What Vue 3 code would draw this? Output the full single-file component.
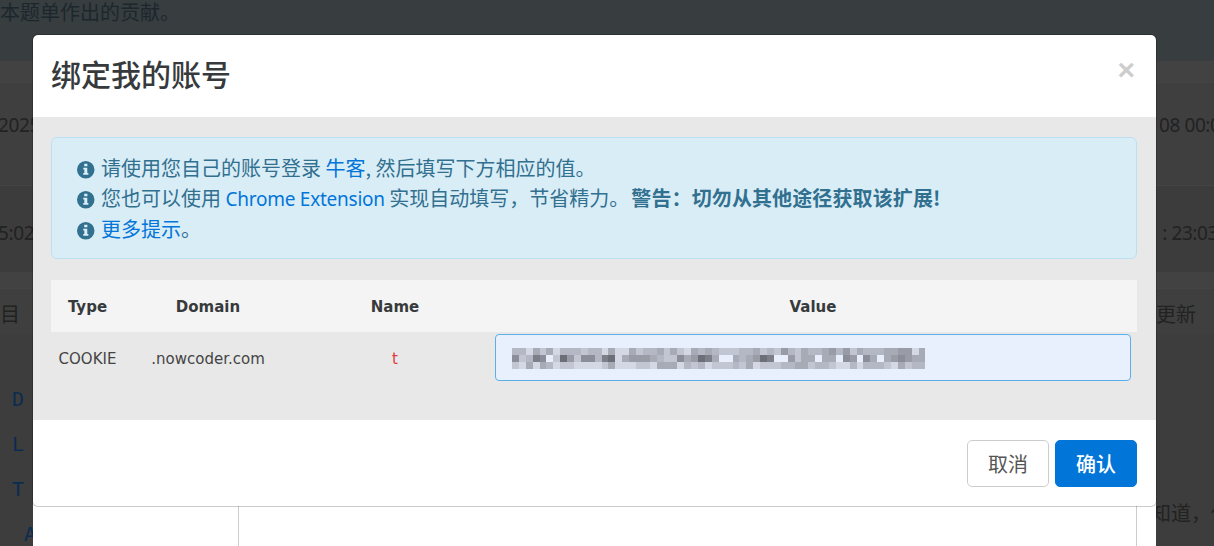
<script setup>
const infoPath = 'M8 0a8 8 0 1 1 0 16A8 8 0 0 1 8 0ZM6.6 2.6v2.3h2.9V2.6ZM5.7 6.2v1.6h1v3.1h-1v1.7h4.7v-1.7h-1V6.2Z'
const rows = [
  '66857586667668588576' + '65757856567776657674' + '67566546475666554485',
  '37623971473362185444' + '56773541259956541299' + '47559559349359543455',
  '78585687788887588877' + '85558676877767587776' + '65576678868666785766'
]
const palette = ['#5f6168', '#6c6f77', '#7c7f88', '#8b8e98', '#999ca7', '#a7abb6', '#b4b8c4', '#c2c6d2', '#d3d8e4', '#e8eefc']
const cells = rows.flatMap((row) =>
  Array.from({ length: 60 }, (_, i) => palette[Number(row[i] ?? 9)])
)
</script>

<template>
  <div class="page">
    <div class="top">本题单作出的贡献。</div>
    <div class="band"></div>
    <div class="row row-date"><span class="clip-left">2025</span><span class="clip-date">08 00:00</span></div>
    <div class="row row-time"><span class="clip-left">5:02</span><span class="clip-time">: 23:03</span></div>
    <div class="band band-short"></div>
    <div class="row row-tabs"><span>目</span><span class="tab-right">更新</span></div>
    <div class="lower">
      <div class="side-left">
        <span>D</span>
        <span>L</span>
        <span>T</span>
        <span class="indent">A</span>
      </div>
      <div class="sheet"><div class="sheet-main"></div></div>
      <div class="side-right"><span>知道，你</span></div>
    </div>

    <section class="modal">
      <header class="modal-head">
        <h2>绑定我的账号</h2>
        <span class="close">×</span>
      </header>
      <div class="modal-body">
        <div class="alert">
          <p><svg class="info" viewBox="0 0 16 16"><path :d="infoPath" fill-rule="evenodd" /></svg>请使用您自己的账号登录 <a>牛客</a>, 然后填写下方相应的值。</p>
          <p><svg class="info" viewBox="0 0 16 16"><path :d="infoPath" fill-rule="evenodd" /></svg>您也可以使用 <a class="latin">Chrome Extension</a> 实现自动填写，节省精力。<strong>警告：切勿从其他途径获取该扩展!</strong></p>
          <p><svg class="info" viewBox="0 0 16 16"><path :d="infoPath" fill-rule="evenodd" /></svg><a>更多提示</a>。</p>
        </div>
        <div class="table">
          <div class="tr th">
            <div class="c-type">Type</div>
            <div class="c-domain">Domain</div>
            <div class="c-name">Name</div>
            <div class="c-value">Value</div>
          </div>
          <div class="tr td">
            <div class="c-type">COOKIE</div>
            <div class="c-domain">.nowcoder.com</div>
            <div class="c-name red">t</div>
            <div class="c-value">
              <div class="input">
                <div class="mosaic">
                  <i v-for="(c, i) in cells" :key="i" :style="{ background: c }"></i>
                </div>
              </div>
            </div>
          </div>
        </div>
      </div>
      <footer class="modal-foot">
        <button class="btn">取消</button>
        <button class="btn primary">确认</button>
      </footer>
    </section>
  </div>
</template>

<style>
html, body { margin: 0; background: #3d3d3d; }
</style>

<style scoped>
.page {
  position: relative;
  width: 1214px;
  height: 546px;
  overflow: hidden;
  background: #3d3d3d;
  color: #222;
  font: 20px/30px "Noto Sans CJK SC", sans-serif;
}
.top {
  height: 61px;
  background: #383d40;
  color: #1c272d;
  line-height: 24px;
}
.band { height: 21px; background: #424242; }
.band-short { height: 16px; }
.row {
  display: flex;
  justify-content: space-between;
  align-items: center;
  overflow: hidden;
  box-sizing: border-box;
  border-top: 1px solid #444;
}
.row-date, .row-time {
  font: 19px/30px "Noto Sans", sans-serif;
  letter-spacing: -0.4px;
  white-space: nowrap;
}
.row-date { height: 103px; background: #3f3f3f; padding-bottom: 19px; }
.row-time { height: 87px; background: #3c3c3c; padding-top: 8px; }
.row-tabs { height: 46px; background: #3f3f3f; padding-top: 5px; }
.clip-left { margin-left: -2px; }
.clip-date { margin-right: -17px; }
.clip-time { margin-right: -4px; }
.tab-right { margin-right: 18px; }
.lower {
  display: grid;
  grid-template-columns: 33px 1123px 58px;
  height: 212px;
}
.side-left {
  display: flex;
  flex-direction: column;
  align-items: flex-start;
  padding: 50px 0 0 12px;
  gap: 15px;
  color: #0a2c50;
  font: 20px/30px "DejaVu Sans Mono", monospace;
  white-space: nowrap;
}
.indent { margin-left: 12px; }
.sheet { background: #fff; }
.sheet-main {
  margin-left: 205px;
  width: 899px;
  height: 100%;
  border-left: 1px solid #ccc;
  border-right: 1px solid #ccc;
  box-sizing: border-box;
}
.side-right {
  overflow: hidden;
  padding-top: 164px;
  white-space: nowrap;
}
.side-right span { display: block; margin-left: -5px; }

.modal {
  position: absolute;
  left: 32px;
  top: 34px;
  width: 1125px;
  height: 473px;
  box-sizing: border-box;
  display: flex;
  flex-direction: column;
  background: #fff;
  border: 1px solid rgba(0, 0, 0, 0.2);
  border-radius: 6px;
  background-clip: padding-box;
  overflow: hidden;
}
.modal-head {
  height: 82px;
  flex: none;
  display: flex;
  justify-content: space-between;
  align-items: center;
  padding: 0 18px;
  box-sizing: border-box;
}
.modal-head h2 {
  margin: -6px 0 0;
  font-size: 30px;
  line-height: 76px;
  font-weight: 500;
  color: #373a3c;
}
.close {
  font: 700 30px/30px "Liberation Sans", sans-serif;
  color: #cdcdcd;
  margin-right: 3px;
  margin-top: -12px;
}
.modal-body {
  flex: none;
  height: 303px;
  background: #e8e8e8;
  padding: 20px 19px 0 18px;
  box-sizing: border-box;
}
.alert {
  height: 122px;
  box-sizing: border-box;
  padding: 15px 25px;
  background: #d9edf7;
  border: 1px solid #bcdff1;
  border-radius: 6px;
  color: #31708f;
}
.alert p {
  margin: 0;
  height: 30px;
  line-height: 30px;
  white-space: nowrap;
}
.alert p:nth-child(3) { margin-top: 1px; }
.alert a { color: #0275d8; }
.latin {
  font-family: "Noto Sans", sans-serif;
  font-size: 19px;
  letter-spacing: -0.25px;
}
.alert strong { font-weight: 700; margin-left: 2px; letter-spacing: 0.12px; }
.info {
  width: 17.5px;
  height: 17.5px;
  fill: #31708f;
  vertical-align: -2.5px;
  margin-right: 6.5px;
}
.table {
  margin-top: 21px;
  font: 15px/22px "DejaVu Sans", sans-serif;
  color: #373a3c;
}
.tr {
  display: grid;
  grid-template-columns: 73px 168px 197px 648px;
  align-items: center;
  text-align: center;
}
.th { height: 52px; background: #f4f4f4; font-weight: 700; padding-top: 2px; box-sizing: border-box; }
.td { height: 51px; color: #444; }
.td .c-type, .td .c-domain, .td .c-name { padding-top: 2px; }
.c-name { padding-left: 9px; }
.red { color: #e23a3a; }
.c-value { padding: 0 6px; }
.input {
  height: 47px;
  box-sizing: border-box;
  background: #e8f0fe;
  border: 1px solid #5cb0ea;
  border-radius: 4px;
  padding: 13px 0 0 16px;
}
.mosaic {
  display: grid;
  grid-template-columns: repeat(60, 6.9px);
  grid-auto-rows: 7px;
  width: 414px;
}
.mosaic i { display: block; }
.modal-foot {
  flex: 1;
  display: flex;
  justify-content: flex-end;
  gap: 6px;
  padding: 20px 19px 0 0;
  box-sizing: border-box;
}
.btn {
  width: 82px;
  height: 47px;
  box-sizing: border-box;
  border: 1px solid #ccc;
  border-radius: 5px;
  background: #fff;
  color: #555;
  font: 20px/30px "Noto Sans CJK SC", sans-serif;
  padding: 0;
}
.primary {
  background: #0275d8;
  border-color: #0275d8;
  color: #fff;
  font-weight: 500;
}
</style>
